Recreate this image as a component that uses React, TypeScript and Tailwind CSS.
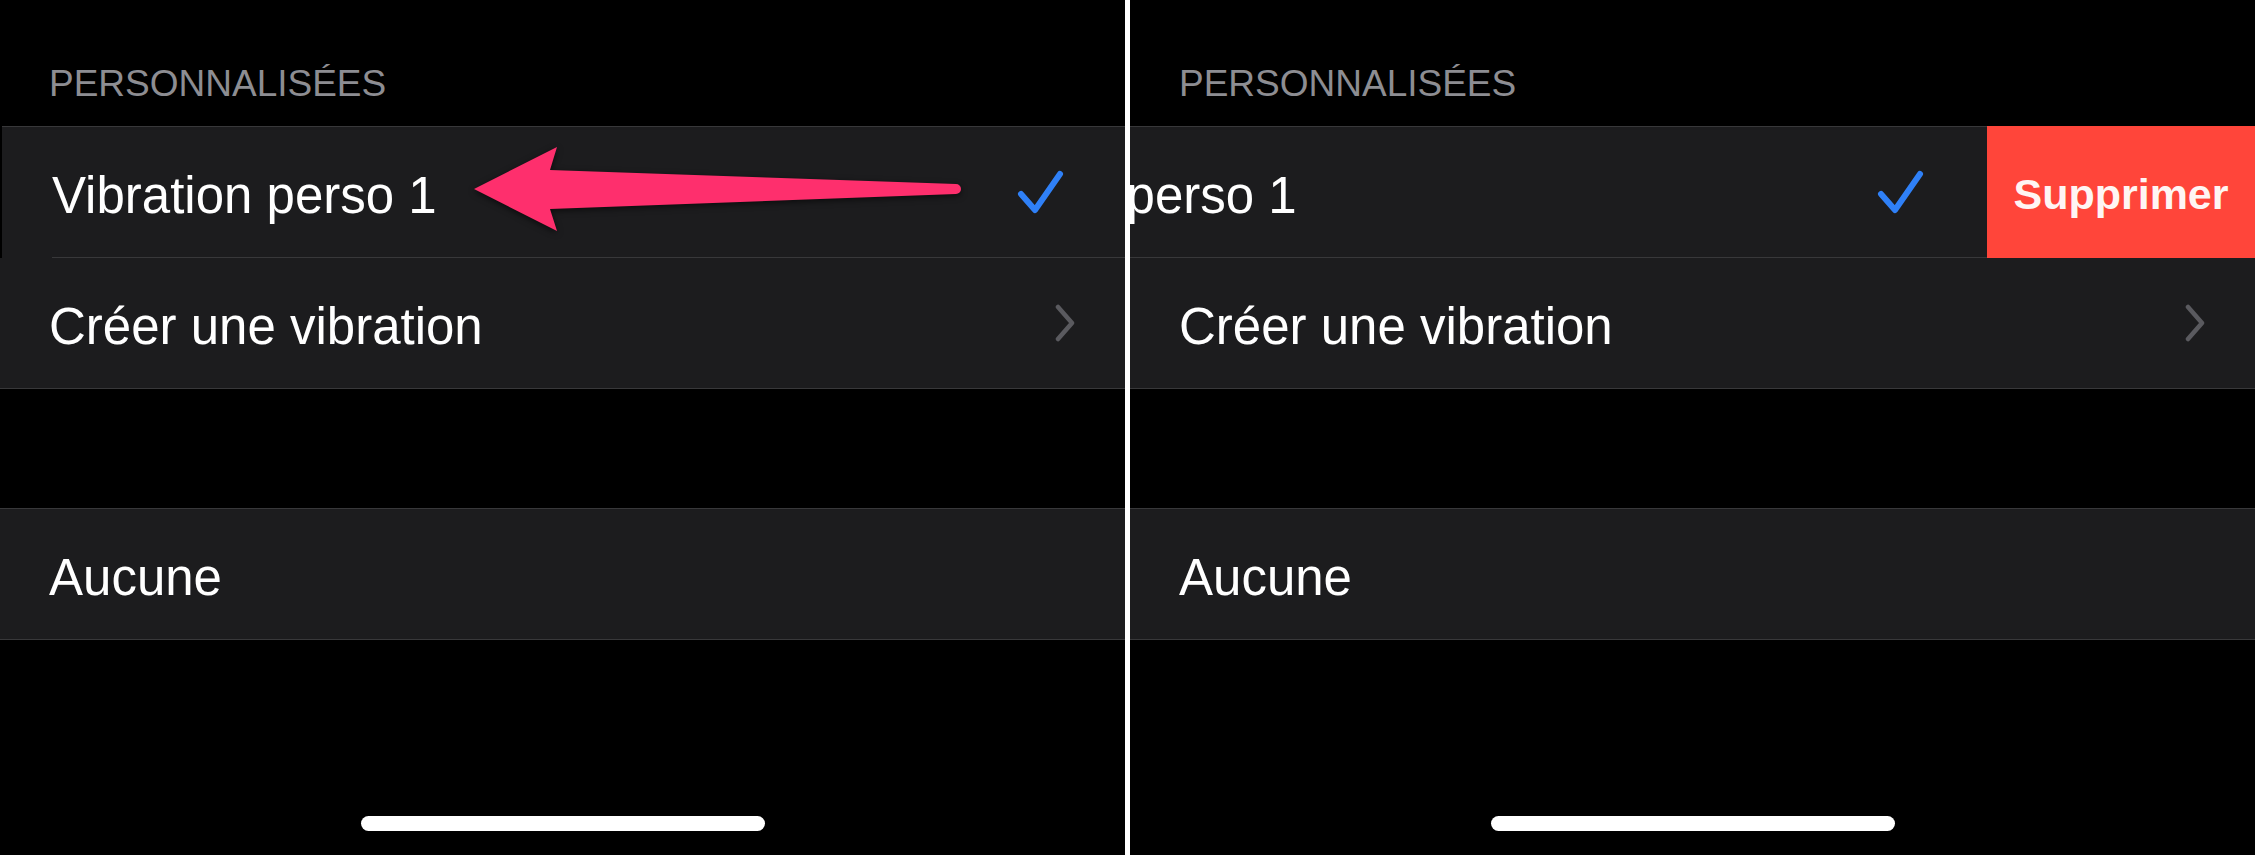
import { Fragment } from 'react';

type PanelProps = {
  swiped?: boolean;
};

const font = { fontFamily: '"Liberation Sans", Arial, sans-serif' };

function Check() {
  return (
    <svg width="49" height="49" viewBox="0 0 49 49" fill="none">
      <path
        d="M5 26 L19 42 L44 6"
        stroke="#2f80f7"
        strokeWidth={6}
        strokeLinecap="round"
        strokeLinejoin="round"
      />
    </svg>
  );
}

function Chevron() {
  return (
    <svg width="22" height="38" viewBox="0 0 22 38" fill="none">
      <path
        d="M4 3 L18 19 L4 35"
        stroke="#5a5a5f"
        strokeWidth={4.5}
        strokeLinecap="round"
        strokeLinejoin="round"
      />
    </svg>
  );
}

function Arrow() {
  return (
    <svg
      className="absolute left-[470px] top-[143px] drop-shadow-[0_2px_3px_rgba(0,0,0,0.6)]"
      width="495"
      height="92"
      viewBox="0 0 495 92"
    >
      <path
        d="M4 46 L87 4 L80 27 L486 41 A5 5 0 0 1 486 51 L80 66 L87 88 Z"
        fill="#fe2f6d"
      />
    </svg>
  );
}

function Panel({ swiped }: PanelProps) {
  return (
    <div className="relative w-[1125px] h-[855px] shrink-0 bg-black flex flex-col" style={font}>
      {/* header */}
      <div className="h-[126px] pt-[65px] pl-[49px]">
        <div className="text-[37px] leading-none text-[#8d8d92]">PERSONNALISÉES</div>
      </div>

      {/* ligne swipable */}
      <div className="overflow-hidden">
        <div
          className={
            swiped
              ? 'flex w-[1393px] -translate-x-[268px]'
              : 'flex w-[1393px] translate-x-[2px]'
          }
        >
          <div className="w-[1125px] shrink-0 bg-[#1c1c1e] border-t border-[#38383a]">
            <div className="h-[130px] flex items-center justify-between pl-[50px] pr-[62px]">
              <span className="mt-[7px] text-[51px] leading-none text-white whitespace-nowrap">
                Vibration perso 1
              </span>
              <Check />
            </div>
            <div className="ml-[50px] h-px bg-[#38383a]" />
          </div>
          <div className="w-[268px] shrink-0 bg-[#ff453a] flex items-center justify-center">
            <span className="mt-[4px] text-[43px] leading-none font-bold text-[#fff5f4]">Supprimer</span>
          </div>
        </div>
      </div>

      <div className="h-[131px] bg-[#1c1c1e] border-b border-[#38383a] flex items-center justify-between pl-[49px] pr-[49px]">
        <span className="mt-[7px] text-[51px] leading-none text-white">Créer une vibration</span>
        <Chevron />
      </div>

      <div className="h-[119px]" />

      <div className="h-[132px] bg-[#1c1c1e] border-y border-[#38383a] flex items-center pl-[49px]">
        <span className="mt-[7px] text-[51px] leading-none text-white">Aucune</span>
      </div>

      <div className="flex-1" />
      <div className="mb-[24px] flex justify-center">
        <div className="w-[404px] h-[15px] rounded-full bg-white" />
      </div>

      {!swiped && <Arrow />}
    </div>
  );
}

export default function App() {
  return (
    <div className="w-[2255px] h-[855px] flex bg-black overflow-hidden">
      <Fragment>
        <Panel />
        <div className="w-[5px] shrink-0 bg-white" />
        <Panel swiped />
      </Fragment>
    </div>
  );
}
